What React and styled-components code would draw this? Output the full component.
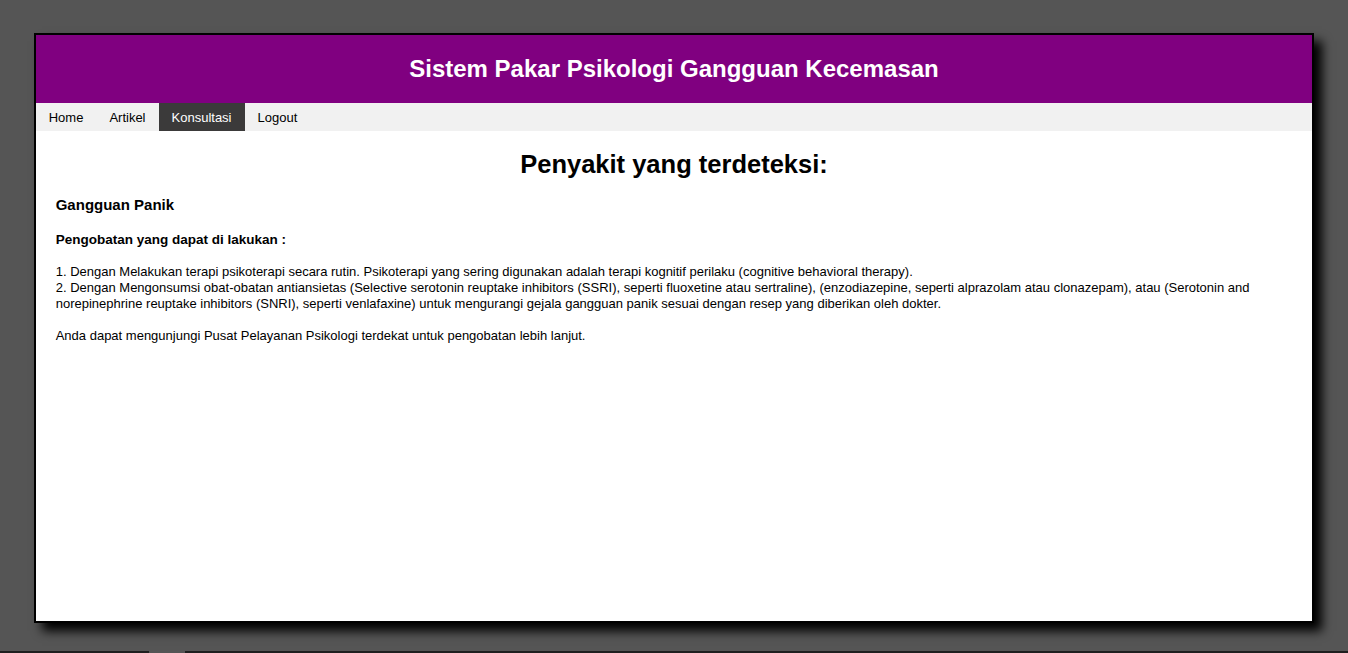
import React from "react";
import styled, { createGlobalStyle } from "styled-components";

const GlobalStyle = createGlobalStyle`
  html, body {
    margin: 0;
    padding: 0;
    background: #555555;
    font-family: "Liberation Sans", Arial, sans-serif;
    overflow: hidden;
  }
`;

const Page = styled.div`
  height: 653px;
  display: flex;
  flex-direction: column;
  padding-top: 33px;
  box-sizing: border-box;
`;

const Container = styled.div`
  box-sizing: border-box;
  width: 95%;
  height: 590px;
  margin: 0 auto;
  border: 2px solid #000;
  background: #fff;
  box-shadow: 8px 8px 10px #000;
  display: flex;
  flex-direction: column;
`;

const Header = styled.header`
  height: 68px;
  background: #800080;
  color: #fff;
  display: flex;
  align-items: center;
  justify-content: center;
  h1 {
    margin: 0;
    font-size: 24px;
    font-weight: bold;
  }
`;

const Nav = styled.nav`
  height: 28px;
  background: #f1f1f1;
  display: flex;
`;

const NavItem = styled.a`
  display: flex;
  align-items: center;
  padding: 0 13px;
  font-size: 13px;
  color: ${(p) => (p.$active ? "#fff" : "#000")};
  background: ${(p) => (p.$active ? "#3b3a3a" : "transparent")};
  text-decoration: none;
  cursor: pointer;
`;

const Content = styled.main`
  flex: 1;
  padding: 0 20px;
  color: #000;
`;

const Title = styled.h2`
  margin: 18px 0 0;
  text-align: center;
  font-size: 25.5px;
  line-height: 30px;
`;

const Disease = styled.h4`
  margin: 17px 0 0;
  font-size: 15px;
  line-height: 18px;
`;

const Body = styled.p`
  margin: 18px 0 0;
  font-size: 13px;
  line-height: 16px;
  b {
    font-size: 13.5px;
  }
`;

const Bottom = styled.div`
  margin-top: auto;
  height: 2px;
  background: #1f1f1f;
  display: flex;
`;

const Thumb = styled.div`
  margin-left: 149px;
  width: 36px;
  background: #555555;
`;

const menu = ["Home", "Artikel", "Konsultasi", "Logout"];

export default function App() {
  return (
    <>
      <GlobalStyle />
      <Page>
        <Container>
          <Header>
            <h1>Sistem Pakar Psikologi Gangguan Kecemasan</h1>
          </Header>
          <Nav>
            {menu.map((m) => (
              <NavItem key={m} $active={m === "Konsultasi"}>
                {m}
              </NavItem>
            ))}
          </Nav>
          <Content>
            <Title>Penyakit yang terdeteksi:</Title>
            <Disease>Gangguan Panik</Disease>
            <Body>
              <b>Pengobatan yang dapat di lakukan :</b>
              <br />
              <br />
              1. Dengan Melakukan terapi psikoterapi secara rutin. Psikoterapi yang sering digunakan adalah terapi kognitif perilaku (cognitive behavioral therapy).
              <br />
              2. Dengan Mengonsumsi obat-obatan antiansietas (Selective serotonin reuptake inhibitors (SSRI), seperti fluoxetine atau sertraline), (enzodiazepine, seperti alprazolam atau clonazepam), atau (Serotonin and norepinephrine reuptake inhibitors (SNRI), seperti venlafaxine) untuk mengurangi gejala gangguan panik sesuai dengan resep yang diberikan oleh dokter.
              <br />
              <br />
              Anda dapat mengunjungi Pusat Pelayanan Psikologi terdekat untuk pengobatan lebih lanjut.
            </Body>
          </Content>
        </Container>
        <Bottom>
          <Thumb />
        </Bottom>
      </Page>
    </>
  );
}
